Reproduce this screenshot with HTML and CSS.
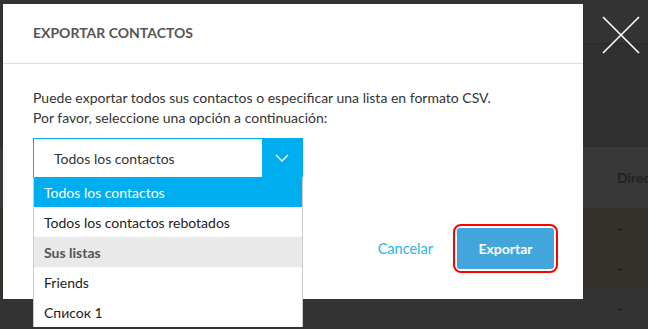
FILE: index.html
```html
<!DOCTYPE html>
<html lang="es">
<head>
  <meta charset="UTF-8">
  <meta name="viewport" content="width=device-width, initial-scale=1.0">
  <title>Exportar contactos</title>
  <link rel="stylesheet" href="styles.css">
</head>
<body>
  <!-- page behind the overlay -->
  <div class="page">
    <div class="topbar"></div>
    <div class="toolbar"></div>
    <div class="table-head"><span class="col">Direc</span></div>
    <div class="table-row odd"><span class="col">-</span></div>
    <div class="table-row odd"><span class="col">-</span></div>
    <div class="table-row"><span class="col">-</span></div>
  </div>

  <button class="close-btn" aria-label="Cerrar">
    <svg width="38" height="38" viewBox="0 0 38 38">
      <path d="M1 1 L37 37 M37 1 L1 37" stroke="#fff" stroke-width="1.6" fill="none"/>
    </svg>
  </button>

  <div class="modal">
    <div class="modal-header">EXPORTAR CONTACTOS</div>
    <div class="modal-body">
      <p class="intro">Puede exportar todos sus contactos o especificar una lista en formato CSV.<br>
        Por favor, seleccione una opción a continuación:</p>

      <div class="select">
        <div class="select-value">Todos los contactos</div>
        <div class="select-arrow">
          <svg width="14" height="8" viewBox="0 0 14 8">
            <path d="M1 1 L7 7 L13 1" stroke="#fff" stroke-width="1.3" fill="none"/>
          </svg>
        </div>
        <ul class="select-menu">
          <li class="option active">Todos los contactos</li>
          <li class="option">Todos los contactos rebotados</li>
          <li class="option group">Sus listas</li>
          <li class="option">Friends</li>
          <li class="option">Список 1</li>
        </ul>
      </div>

      <div class="modal-footer">
        <a class="cancel-link" href="#">Cancelar</a>
        <span class="highlight"><button class="export-btn">Exportar</button></span>
      </div>
    </div>
  </div>
</body>
</html>
```

FILE: styles.css
```css
body {
  margin: 0;
  background-color: #333;
  font-family: "Lato", "Open Sans", sans-serif;
  font-size: 14px;
  color: #333;
  height: 329px;
  overflow: hidden;
  position: relative;
}

/* background page */
.page {
  display: flex;
  flex-direction: column;
}

.topbar {
  height: 43px;
  background-color: #333;
  border-bottom: 1px solid #2a2a2a;
}

.toolbar {
  height: 102px;
  background-color: #2f2f2f;
  border-bottom: 1px solid #2a2a2a;
}

.table-head {
  height: 61px;
  background-color: #383838;
  display: flex;
  align-items: center;
  font-weight: bold;
  color: #222;
}

.table-row {
  height: 40px;
  display: flex;
  align-items: center;
  color: #111;
  background-color: #333;
}

.table-row.odd {
  background-color: #35322b;
}

.col {
  padding-left: 617px;
}

/* close button */
.close-btn {
  position: absolute;
  top: 16px;
  left: 602px;
  padding: 0;
  border: none;
  background: none;
  line-height: 0;
}

/* modal */
.modal {
  position: absolute;
  top: 4px;
  left: 3px;
  width: 580px;
  height: 295px;
  background-color: #fff;
}

.modal-header {
  height: 60px;
  box-sizing: border-box;
  padding: 21px 30px 0;
  border-bottom: 1px solid #ddd;
  font-size: 14px;
  font-weight: bold;
  color: #555;
  line-height: 16px;
}

.modal-body {
  padding: 24px 25px 0 30px;
}

.intro {
  margin: 0;
  line-height: 20px;
  color: #333;
}

.select {
  position: relative;
  margin-top: 10px;
  width: 270px;
  height: 40px;
  box-sizing: border-box;
  border: 1px solid #00aeef;
  display: flex;
}

.select-value {
  flex: 1;
  padding: 2px 0 0 20px;
  line-height: 36px;
  color: #333;
}

.select-arrow {
  width: 40px;
  background-color: #00aeef;
  display: flex;
  align-items: center;
  justify-content: center;
}

.select-menu {
  position: absolute;
  top: 38px;
  left: -1px;
  width: 270px;
  box-sizing: border-box;
  margin: 0;
  padding: 0;
  list-style: none;
  background-color: #fff;
  border-left: 1px solid #ccc;
  border-right: 1px solid #ccc;
  z-index: 10;
}

.option {
  height: 30px;
  box-sizing: border-box;
  padding: 2px 0 0 10px;
  line-height: 28px;
  color: #222;
}

.option.active {
  background-color: #00aeef;
  color: #fff;
}

.option.group {
  background-color: #e9e9e9;
  font-weight: bold;
  color: #555;
}

.modal-footer {
  margin-top: 46px;
  display: flex;
  justify-content: flex-end;
  align-items: center;
  gap: 20px;
}

.cancel-link {
  color: #2ab3e8;
  font-size: 14.5px;
  text-decoration: none;
}

.highlight {
  display: inline-block;
  border: 2px solid #f00;
  border-radius: 8px;
  padding: 2px;
  line-height: 0;
}

.export-btn {
  width: 97px;
  height: 41px;
  border: none;
  border-radius: 3px;
  background-color: #42a5dc;
  color: #fff;
  font-family: inherit;
  font-size: 14px;
  font-weight: bold;
}
```
